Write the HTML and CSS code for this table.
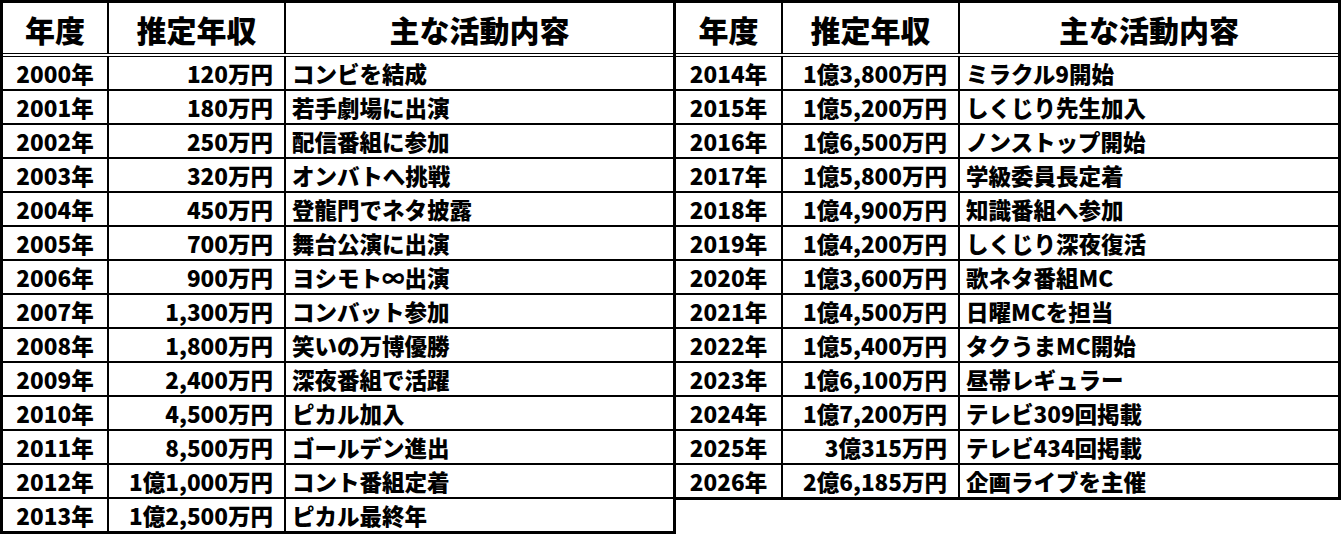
FILE: index.html
```html
<!DOCTYPE html>
<html lang="ja">
<head>
<meta charset="utf-8">
<title>推定年収</title>
<link rel="stylesheet" href="styles.css">
</head>
<body>
<div class="sheet">
  <div class="tbl tbl-left">
    <div class="row head"><div class="c">年度</div><div class="c">推定年収</div><div class="c">主な活動内容</div></div>
    <div class="row"><div class="c y">2000年</div><div class="c m">120万円</div><div class="c a">コンビを結成</div></div>
    <div class="row"><div class="c y">2001年</div><div class="c m">180万円</div><div class="c a">若手劇場に出演</div></div>
    <div class="row"><div class="c y">2002年</div><div class="c m">250万円</div><div class="c a">配信番組に参加</div></div>
    <div class="row"><div class="c y">2003年</div><div class="c m">320万円</div><div class="c a">オンバトへ挑戦</div></div>
    <div class="row"><div class="c y">2004年</div><div class="c m">450万円</div><div class="c a">登龍門でネタ披露</div></div>
    <div class="row"><div class="c y">2005年</div><div class="c m">700万円</div><div class="c a">舞台公演に出演</div></div>
    <div class="row"><div class="c y">2006年</div><div class="c m">900万円</div><div class="c a">ヨシモト∞出演</div></div>
    <div class="row"><div class="c y">2007年</div><div class="c m">1,300万円</div><div class="c a">コンバット参加</div></div>
    <div class="row"><div class="c y">2008年</div><div class="c m">1,800万円</div><div class="c a">笑いの万博優勝</div></div>
    <div class="row"><div class="c y">2009年</div><div class="c m">2,400万円</div><div class="c a">深夜番組で活躍</div></div>
    <div class="row"><div class="c y">2010年</div><div class="c m">4,500万円</div><div class="c a">ピカル加入</div></div>
    <div class="row"><div class="c y">2011年</div><div class="c m">8,500万円</div><div class="c a">ゴールデン進出</div></div>
    <div class="row"><div class="c y">2012年</div><div class="c m">1億1,000万円</div><div class="c a">コント番組定着</div></div>
    <div class="row"><div class="c y">2013年</div><div class="c m">1億2,500万円</div><div class="c a">ピカル最終年</div></div>
  </div>
  <div class="tbl tbl-right">
    <div class="row head"><div class="c">年度</div><div class="c">推定年収</div><div class="c">主な活動内容</div></div>
    <div class="row"><div class="c y">2014年</div><div class="c m">1億3,800万円</div><div class="c a">ミラクル9開始</div></div>
    <div class="row"><div class="c y">2015年</div><div class="c m">1億5,200万円</div><div class="c a">しくじり先生加入</div></div>
    <div class="row"><div class="c y">2016年</div><div class="c m">1億6,500万円</div><div class="c a">ノンストップ開始</div></div>
    <div class="row"><div class="c y">2017年</div><div class="c m">1億5,800万円</div><div class="c a">学級委員長定着</div></div>
    <div class="row"><div class="c y">2018年</div><div class="c m">1億4,900万円</div><div class="c a">知識番組へ参加</div></div>
    <div class="row"><div class="c y">2019年</div><div class="c m">1億4,200万円</div><div class="c a">しくじり深夜復活</div></div>
    <div class="row"><div class="c y">2020年</div><div class="c m">1億3,600万円</div><div class="c a">歌ネタ番組MC</div></div>
    <div class="row"><div class="c y">2021年</div><div class="c m">1億4,500万円</div><div class="c a">日曜MCを担当</div></div>
    <div class="row"><div class="c y">2022年</div><div class="c m">1億5,400万円</div><div class="c a">タクうまMC開始</div></div>
    <div class="row"><div class="c y">2023年</div><div class="c m">1億6,100万円</div><div class="c a">昼帯レギュラー</div></div>
    <div class="row"><div class="c y">2024年</div><div class="c m">1億7,200万円</div><div class="c a">テレビ309回掲載</div></div>
    <div class="row"><div class="c y">2025年</div><div class="c m">3億315万円</div><div class="c a">テレビ434回掲載</div></div>
    <div class="row"><div class="c y">2026年</div><div class="c m">2億6,185万円</div><div class="c a">企画ライブを主催</div></div>
  </div>
</div>
</body>
</html>
```

FILE: styles.css
```css
* { box-sizing: border-box; }
html, body { margin: 0; padding: 0; background: #fff; }
body {
  font-family: "Noto Sans CJK JP", "Noto Sans", sans-serif;
  font-weight: 900;
  color: #000;
}
.sheet {
  display: flex;
  align-items: flex-start;
  width: 1341px;
}
.tbl {
  display: flex;
  flex-direction: column;
  border: 3px solid #000;
}
.tbl-left { width: 676px; }
.tbl-right { width: 665px; border-left: 0; }
.row {
  display: grid;
  grid-template-columns: 106px 177px 1fr;
  height: 34px;
  border-bottom: 2px solid #000;
}
.tbl-right .row { grid-template-columns: 107px 177px 1fr; }
.row:last-child { border-bottom: 0; height: 32px; }
.row.head {
  height: 54px;
  border-bottom: 4px double #000;
}
.c {
  display: flex;
  align-items: center;
  border-right: 2px solid #000;
  font-size: 22.5px;
  line-height: 1;
  white-space: nowrap;
  overflow: hidden;
}
.c:last-child { border-right: 0; }
.head .c {
  justify-content: center;
  font-size: 30px;
  padding-top: 2px;
}
.y { justify-content: center; }
.m { justify-content: flex-end; padding-right: 11px; }
.a { justify-content: flex-start; padding-left: 6px; }
```
